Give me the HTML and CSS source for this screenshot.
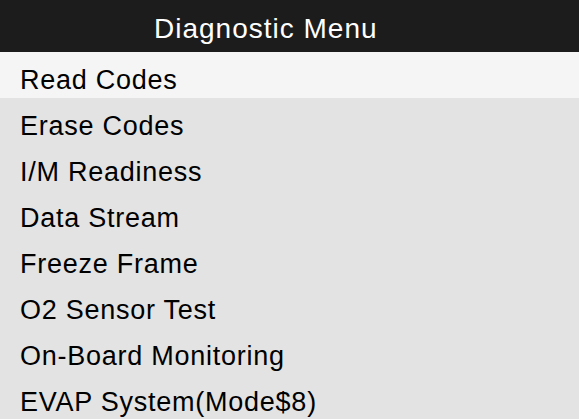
FILE: index.html
```html
<!DOCTYPE html>
<html>
<head>
<meta charset="utf-8">
<link rel="stylesheet" href="styles.css">
</head>
<body>
<div class="screen">
  <div class="header">Diagnostic Menu</div>
  <ul class="menu">
    <li class="item active">Read Codes</li>
    <li class="item">Erase Codes</li>
    <li class="item">I/M Readiness</li>
    <li class="item">Data Stream</li>
    <li class="item">Freeze Frame</li>
    <li class="item">O2 Sensor Test</li>
    <li class="item">On-Board Monitoring</li>
    <li class="item">EVAP System(Mode$8)</li>
  </ul>
</div>
</body>
</html>
```
FILE: styles.css
```css
html, body {
  margin: 0;
  padding: 0;
  background: #e3e3e3;
}
.screen {
  width: 579px;
  height: 419px;
  overflow: hidden;
  font-family: "Liberation Sans", Arial, sans-serif;
  background: #e3e3e3;
}
.header {
  height: 52px;
  background: #1c1c1c;
  color: #ffffff;
  font-size: 28px;
  letter-spacing: 1px;
  line-height: 52px;
  padding-top: 3px;
  padding-left: 154px;
  box-sizing: border-box;
}
.menu {
  list-style: none;
  margin: 0;
  padding: 0;
}
.item {
  height: 46px;
  box-sizing: border-box;
  line-height: 46px;
  padding-top: 5px;
  padding-left: 20px;
  font-size: 27px;
  letter-spacing: 0.75px;
  color: #000000;
}
.item.active {
  background: #f5f5f5;
}
```
